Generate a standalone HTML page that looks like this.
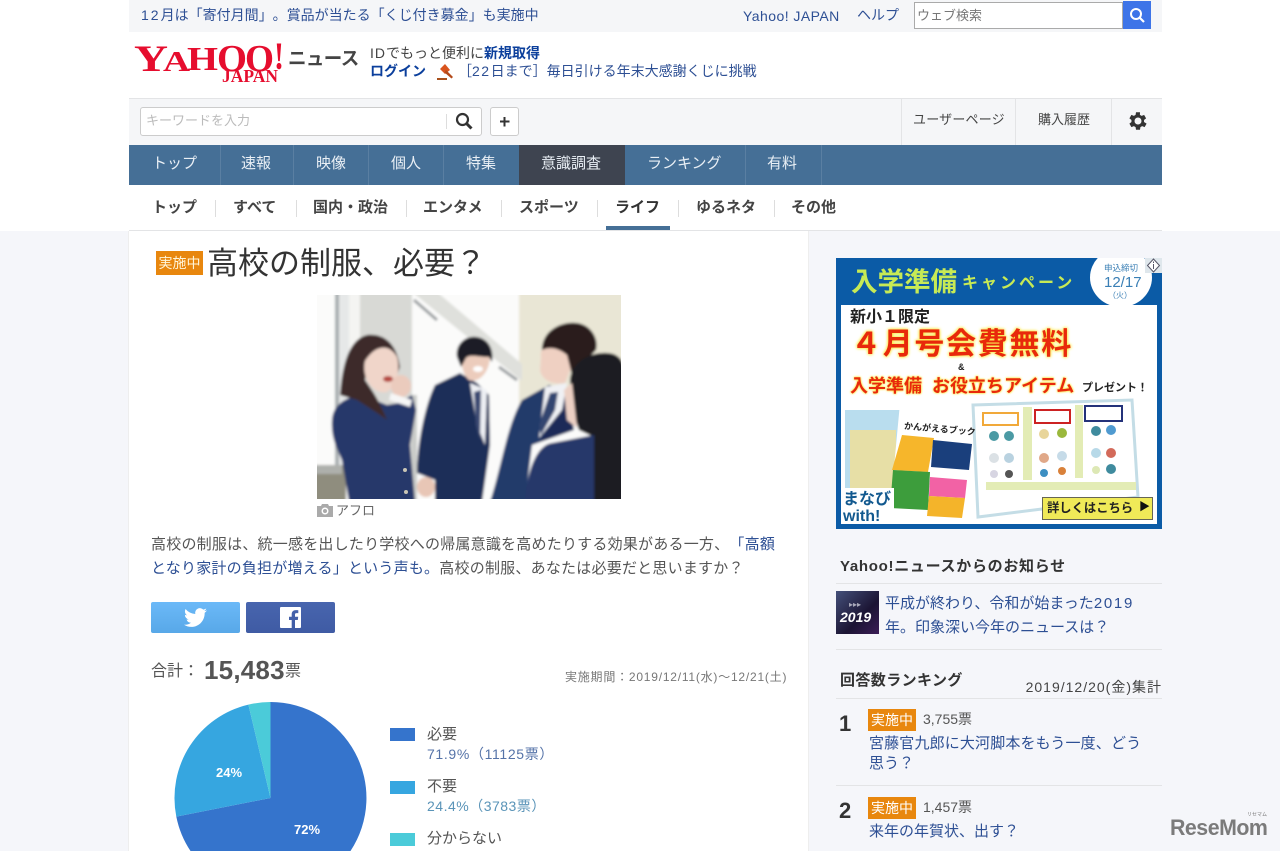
<!DOCTYPE html>
<html lang="ja"><head><meta charset="utf-8"><title>高校の制服、必要？</title>
<style>
html,body{margin:0;padding:0;background:#fff;overflow:hidden;width:1280px;height:851px}
#w{width:1280px;height:851px;overflow:hidden;position:relative;font-family:"Liberation Sans","Noto Sans CJK JP",sans-serif;color:#444;text-spacing-trim:space-all}
.b{position:absolute}
.t{position:absolute;white-space:nowrap;line-height:20px}
.l{color:#2d4f94}
.n{color:#e9eff5;font-size:15px;line-height:20px;top:154px;position:absolute;white-space:nowrap}
.s{position:absolute;top:145px;width:1px;height:40px;background:#5a7fa2}
.m{position:absolute;top:199px;line-height:18px;font-size:15px;font-weight:bold;color:#444;white-space:nowrap}
.d{position:absolute;top:200px;width:1px;height:17px;background:#ddd}
.ad{position:absolute;white-space:nowrap;line-height:1;font-weight:bold}
.badge{position:absolute;background:#e8870e;color:#fff;font-size:14px;line-height:22px;text-align:center;width:48px;height:22px}
</style></head><body><div id="w">
<div class="b" style="left:0;top:231px;width:1280px;height:620px;background:#f5f6fa"></div>
<div class="b" style="left:129px;top:0;width:1033px;height:32px;background:#f5f6f8"></div>
<div class="t l" style="left:141px;top:5px;font-size:14px"><span style="letter-spacing:2px">12</span>月は「寄付月間」。賞品が当たる「くじ付き募金」も実施中</div>
<div class="t l" style="left:743px;top:6px;font-size:14px;letter-spacing:.45px">Yahoo! JAPAN</div>
<div class="t l" style="left:857px;top:5px;font-size:14px">ヘルプ</div>
<div class="b" style="left:914px;top:2px;width:209px;height:27px;border:1px solid #aaa;background:#fff;box-sizing:border-box"></div>
<div class="t" style="left:917px;top:6px;font-size:13px;color:#777">ウェブ検索</div>
<div class="b" style="left:1123px;top:1px;width:28px;height:28px;background:#3d74e8"></div>
<svg class="b" style="left:1123px;top:1px" width="28" height="28"><circle cx="13" cy="13" r="5" fill="none" stroke="#fff" stroke-width="2"/><path d="M17 17l4 4" stroke="#fff" stroke-width="2.2"/></svg>

<svg class="b" style="left:130px;top:38px" width="160" height="50" font-family="Liberation Serif" font-weight="bold" fill="#e60d2e">
<text x="4" y="33" font-size="37" textLength="34" lengthAdjust="spacingAndGlyphs">Y</text>
<text x="33" y="33" font-size="29" textLength="27" lengthAdjust="spacingAndGlyphs">A</text>
<text x="57" y="32" font-size="34" textLength="31" lengthAdjust="spacingAndGlyphs">H</text>
<text x="87" y="33" font-size="38" textLength="30" lengthAdjust="spacingAndGlyphs">O</text>
<text x="115" y="33" font-size="38" textLength="29" lengthAdjust="spacingAndGlyphs">O</text>
<text x="144" y="31" font-size="39" textLength="10" lengthAdjust="spacingAndGlyphs">!</text>
<text x="92" y="44" font-size="18" textLength="56" lengthAdjust="spacingAndGlyphs">JAPAN</text>
</svg>
<div class="t" style="left:288px;top:47px;font-size:18.500px;line-height:24px;font-weight:bold;color:#444;letter-spacing:-.6px">ニュース</div>
<div class="t" style="left:370px;top:43px;font-size:14px;color:#444"><span style="letter-spacing:1px">ID</span>でもっと便利に<b style="color:#0b3f9c">新規取得</b></div>
<div class="t" style="left:370px;top:61px;font-size:14px;font-weight:bold;color:#0b3f9c">ログイン</div>
<svg class="b" style="left:436px;top:61px" width="19" height="20"><path d="M1 17h10v2H1z" fill="#a8501c"/><path d="M4 8l5-5 5 6-5 4z" fill="#d9541e"/><path d="M10 9l7 7-1.500 1.500-7-6z" fill="#b34a1a"/></svg>
<div class="t l" style="left:458px;top:61px;font-size:14px">［<span style="letter-spacing:1.500px">22</span>日まで］毎日引ける年末大感謝くじに挑戦</div>

<div class="b" style="left:129px;top:98px;width:1033px;height:47px;background:#f5f6f8;border-top:1px solid #e3e4e6;box-sizing:border-box"></div>
<div class="b" style="left:140px;top:107px;width:342px;height:29px;background:#fff;border:1px solid #ccc;border-radius:3px;box-sizing:border-box"></div>
<div class="t" style="left:146px;top:111px;font-size:13px;color:#bbb">キーワードを入力</div>
<div class="b" style="left:446px;top:114px;width:1px;height:15px;background:#ddd"></div>
<svg class="b" style="left:455px;top:112px" width="19" height="19"><circle cx="7.500" cy="7.500" r="5.500" fill="none" stroke="#333" stroke-width="2.200"/><path d="M11.500 11.500l5 5" stroke="#333" stroke-width="3"/></svg>
<div class="b" style="left:490px;top:107px;width:29px;height:29px;background:#fff;border:1px solid #ccc;border-radius:3px;box-sizing:border-box"></div>
<svg class="b" style="left:490px;top:107px" width="29" height="29"><path d="M14.500 10v9.500M10 14.500h9.500" stroke="#333" stroke-width="2"/></svg>
<div class="b" style="left:901px;top:99px;width:1px;height:46px;background:#e3e4e6"></div>
<div class="b" style="left:1015px;top:99px;width:1px;height:46px;background:#e3e4e6"></div>
<div class="b" style="left:1111px;top:99px;width:1px;height:46px;background:#e3e4e6"></div>
<div class="t" style="left:913px;top:110px;font-size:13px;color:#444;letter-spacing:.2px">ユーザーページ</div>
<div class="t" style="left:1038px;top:110px;font-size:13px;color:#444">購入履歴</div>
<svg class="b" style="left:1126px;top:109px" width="24" height="24" viewBox="0 0 24 24"><path fill="#333" d="M19.400 13a7.600 7.600 0 000-2l2.100-1.600-2-3.500-2.500 1a7.500 7.500 0 00-1.700-1L15.400 3.200h-4l-.4 2.700a7.500 7.500 0 00-1.700 1l-2.500-1-2 3.500L6.900 11a7.600 7.600 0 000 2l-2.100 1.600 2 3.500 2.500-1a7.500 7.500 0 001.700 1l.4 2.700h4l.4-2.700a7.500 7.500 0 001.700-1l2.500 1 2-3.500zM13.400 15.500a3.500 3.500 0 110-7 3.500 3.500 0 010 7z" transform="translate(-1.400 0)"/></svg>

<div class="b" style="left:129px;top:145px;width:1033px;height:40px;background:#456f96"></div>
<div class="b" style="left:519px;top:145px;width:106px;height:40px;background:#3e4450"></div>
<div class="s" style="left:220px"></div><div class="s" style="left:293px"></div><div class="s" style="left:368px"></div><div class="s" style="left:443px"></div><div class="s" style="left:745px"></div><div class="s" style="left:821px"></div>
<div class="n" style="left:152px">トップ</div><div class="n" style="left:241px">速報</div><div class="n" style="left:316px">映像</div><div class="n" style="left:391px">個人</div><div class="n" style="left:466px">特集</div><div class="n" style="left:541px">意識調査</div><div class="n" style="left:647px">ランキング</div><div class="n" style="left:767px">有料</div>

<div class="m" style="left:152px">トップ</div><div class="d" style="left:215px"></div>
<div class="m" style="left:233px">すべて</div><div class="d" style="left:296px"></div>
<div class="m" style="left:313px">国内・政治</div><div class="d" style="left:406px"></div>
<div class="m" style="left:423px">エンタメ</div><div class="d" style="left:501px"></div>
<div class="m" style="left:519px">スポーツ</div><div class="d" style="left:597px"></div>
<div class="m" style="left:615px;color:#333">ライフ</div><div class="d" style="left:678px"></div>
<div class="m" style="left:696px">ゆるネタ</div><div class="d" style="left:774px"></div>
<div class="m" style="left:791px">その他</div>
<div class="b" style="left:606px;top:226px;width:64px;height:5px;background:#456f96"></div>
<div class="b" style="left:129px;top:230px;width:1033px;height:1px;background:#e3e4e6"></div>

<div class="b" style="left:128px;top:231px;width:681px;height:620px;background:#fff;border-left:1px solid #eee;border-right:1px solid #eee;box-sizing:border-box"></div>
<div class="badge" style="left:156px;top:251px;width:47px;height:24px;line-height:24px;font-size:14px;color:#fff5d8">実施中</div>
<div class="t" style="left:207px;top:243px;font-size:31px;line-height:42px;color:#333">高校の制服、必要？</div>

<svg class="b" style="left:317px;top:295px" width="304" height="204" viewBox="0 0 304 204">
<defs><filter id="f"><feGaussianBlur stdDeviation="1.300"/></filter></defs>
<g filter="url(#f)">
<rect x="-3" y="-3" width="310" height="210" fill="#fbfbfa"/>
<rect x="18" y="-3" width="4" height="175" fill="#a8aeb0"/><rect x="22" y="-3" width="10" height="175" fill="#e6e8e8"/><rect x="32" y="-3" width="11" height="175" fill="#f4f4f2"/>
<rect x="43" y="-3" width="52" height="210" fill="#d8d9d5"/>
<rect x="95" y="100" width="5" height="107" fill="#c9cbc8"/>
<rect x="202" y="-3" width="105" height="113" fill="#e9e6d5"/>
<path d="M95-3h25l85 72v17z" fill="#dfe0dc"/>
<path d="M97 5l23 20M182 72l18 13" stroke="#9a9ea0" stroke-width="3"/>
<rect x="-3" y="170" width="32" height="37" fill="#8f8d7e"/><rect x="-3" y="170" width="28" height="9" fill="#aeb0ac"/>
<path d="M118 90L143 78 160 88 172 100 173 150 165 207H118V185L100 178C100 150 108 110 118 90z" fill="#1f2f58"/>
<path d="M153 88L170 95 168 150 160 130z" fill="#eef0f4"/><path d="M157 97l7-2-1 50-4-15z" fill="#3a4a72"/>
<path d="M145 60C148 50 170 50 173 62 172 80 160 88 152 85 146 80 144 70 145 60z" fill="#ecccbc"/>
<ellipse cx="161" cy="74" rx="5" ry="3" fill="#fff"/>
<path d="M140 62C138 48 150 40 160 42 172 44 177 55 175 67L172 62C160 62 150 58 148 65L144 72z" fill="#1f1f28"/>
<ellipse cx="109" cy="192" rx="9" ry="10" fill="#e8c6b6"/>
<path d="M15 125C16 110 28 102 45 100L70 110 82 108 95 100 99 115 93 150 98 207H32L25 165C18 150 14 140 15 125z" fill="#27396a"/>
<path d="M23 100C25 75 30 45 50 40 68 38 80 50 83 72L80 80C70 60 60 55 52 65L48 85C55 95 62 105 70 125L60 118 40 105z" fill="#3d2b2b"/>
<path d="M48 66C58 50 72 48 80 62 84 78 78 92 70 97 58 100 44 85 48 66z" fill="#f0d5c9"/>
<ellipse cx="71" cy="84" rx="5" ry="3" fill="#b5473f"/>
<ellipse cx="84" cy="91" rx="10" ry="11" fill="#ebcbbd"/>
<path d="M74 98l21 7-2 7-21-7z" fill="#f6f6f6"/>
<path d="M173 207C185 170 190 130 205 105L232 90 250 95 257 135 215 150 208 207z" fill="#223a6a"/>
<path d="M228 92l22-4-5 27-23 28z" fill="#f0f1f4"/><path d="M233 98l8-1-3 18-14 25-2-10z" fill="#33456f"/>
<path d="M250 100l6 35-34 11 23-31z" fill="#1a2c58"/>
<path d="M224 62C222 50 235 45 250 50L255 70 248 88C235 90 225 85 223 75z" fill="#efd0c2"/>
<path d="M225 55C225 35 245 26 260 28 275 30 282 45 279 55L265 70 255 80 250 60C240 52 232 52 225 55z" fill="#2a1d1c"/>
<path d="M253 85C255 65 275 57 290 58 300 58 307 65 307 75V207H277V142L262 135 255 115z" fill="#1b1a20"/>
<path d="M247 95l8-7 5 45-10-8z" fill="#ecd0c4"/>
<path d="M208 207C210 175 220 150 235 148L277 140V207z" fill="#25396a"/>
</g>
<circle cx="88" cy="175" r="2" fill="#c9c5b5"/><circle cx="89" cy="197" r="2" fill="#c9c5b5"/>
</svg>
<svg class="b" style="left:317px;top:503px" width="16" height="15"><path d="M0 3h4l1-2h6l1 2h4v11H0z" fill="#aaa"/><circle cx="8" cy="8" r="3.500" fill="#fff"/><circle cx="8" cy="8" r="2" fill="#aaa"/></svg>
<div class="t" style="left:336px;top:501px;font-size:13px;color:#666">アフロ</div>

<div class="t" style="left:151px;top:535px;font-size:15px;letter-spacing:.22px;color:#555">高校の制服は、統一感を出したり学校への帰属意識を高めたりする効果がある一方、<span class="l">「高額</span></div>
<div class="t" style="left:151px;top:559px;font-size:15px;letter-spacing:.22px;color:#555"><span class="l">となり家計の負担が増える」という声も。</span>高校の制服、あなたは必要だと思いますか？</div>

<div class="b" style="left:151px;top:602px;width:89px;height:31px;border-radius:2px;background:linear-gradient(#6bb9f8,#58a8e8)"></div>
<svg class="b" style="left:184px;top:606px" width="23" height="23" viewBox="0 0 24 24"><path fill="#fff" d="M23.953 4.570a10 10 0 01-2.825.775 4.958 4.958 0 002.163-2.723c-.951.555-2.005.959-3.127 1.184a4.920 4.920 0 00-8.384 4.482C7.690 8.095 4.067 6.130 1.640 3.162a4.822 4.822 0 00-.666 2.475c0 1.710.870 3.213 2.188 4.096a4.904 4.904 0 01-2.228-.616v.060a4.923 4.923 0 003.946 4.827 4.996 4.996 0 01-2.212.085 4.936 4.936 0 004.604 3.417 9.867 9.867 0 01-6.102 2.105c-.390 0-.779-.023-1.170-.067a13.995 13.995 0 007.557 2.209c9.053 0 13.998-7.496 13.998-13.985 0-.210 0-.420-.015-.630A9.935 9.935 0 0024 4.590z"/></svg>
<div class="b" style="left:246px;top:602px;width:89px;height:31px;border-radius:2px;background:linear-gradient(#4865ae,#3f5ba4)"></div>
<svg class="b" style="left:280px;top:607px" width="21" height="21" viewBox="0 0 21 21"><path fill="#fff" d="M1 0h19a1 1 0 011 1v19a1 1 0 01-1 1h-5v-8h2.800l.4-3.200H15V7.700c0-1 .3-1.600 1.600-1.600h1.700V3.200c-.3 0-1.300-.1-2.500-.1-2.500 0-4.100 1.500-4.100 4.200v2.500H9V13h2.700v8H1a1 1 0 01-1-1V1a1 1 0 011-1z"/></svg>

<div class="t" style="left:151px;top:662px;font-size:16px;color:#555">合計：</div>
<div class="t" style="left:204px;top:657px;font-size:26px;line-height:26px;font-weight:bold;color:#555;letter-spacing:.2px">15,483</div>
<div class="t" style="left:285px;top:662px;font-size:16px;color:#555">票</div>
<div class="t" style="left:565px;top:667px;font-size:12px;color:#777;letter-spacing:.78px">実施期間：2019/12/11(水)～12/21(土)</div>

<svg class="b" style="left:170px;top:698px" width="204" height="153" viewBox="170 698 204 153">
<path d="M270.500 798V702A96 96 0 0 1 350.500 851H190.500A96 96 0 0 1 176.300 816.600z" fill="#3574cc"/>
<path d="M270.500 798L176.300 816.600A96 96 0 0 1 248.400 704.600z" fill="#36a6e0"/>
<path d="M270.500 798L248.400 704.600A96 96 0 0 1 270.500 702z" fill="#4bcbd9"/>
<text x="229" y="777" text-anchor="middle" font-family="Liberation Sans" font-size="13" font-weight="bold" fill="#fff">24%</text>
<text x="307" y="834" text-anchor="middle" font-family="Liberation Sans" font-size="13" font-weight="bold" fill="#fff">72%</text>
</svg>
<div class="b" style="left:390px;top:728px;width:25px;height:13px;background:#3574cc"></div>
<div class="t" style="left:427px;top:725px;font-size:15px;color:#555">必要</div>
<div class="t" style="left:427px;top:744px;font-size:14px;color:#5573a8;letter-spacing:.65px">71.9%（11125票）</div>
<div class="b" style="left:390px;top:781px;width:25px;height:13px;background:#36a6e0"></div>
<div class="t" style="left:427px;top:777px;font-size:15px;color:#555">不要</div>
<div class="t" style="left:427px;top:796px;font-size:14px;color:#5a94b8;letter-spacing:.5px">24.4%（3783票）</div>
<div class="b" style="left:390px;top:833px;width:25px;height:13px;background:#4bcbd9"></div>
<div class="t" style="left:427px;top:829px;font-size:15px;line-height:20px;color:#555">分からない</div>

<!-- Ad -->
<div class="b" style="left:836px;top:258px;width:326px;height:271px;background:#0b5ba6;overflow:hidden">
<div class="b" style="left:5px;top:47px;width:316px;height:219px;background:#fff"></div>
<div class="b" style="left:254px;top:-10px;width:62px;height:59px;border-radius:50%;background:#fff"></div>
<div class="ad" style="left:15px;top:11px;font-size:26.500px;color:#c7ea55">入学準備</div>
<div class="ad" style="left:126px;top:18px;font-size:16px;color:#c7ea55;letter-spacing:3px">キャンペーン</div>
<div class="ad" style="left:268px;top:6px;font-size:8.500px;color:#3a7fb5;font-weight:normal">申込締切</div>
<div class="ad" style="left:268px;top:17px;font-size:15px;color:#3a7fb5;font-weight:normal">12/17</div>
<div class="ad" style="left:272px;top:34px;font-size:8px;color:#3a7fb5;font-weight:normal">（火）</div>
<div class="b" style="left:309px;top:0;width:17px;height:15px;background:#dfe7ec"></div>
<svg class="b" style="left:309px;top:0" width="17" height="15"><path d="M8.500 1l6 6.500-6 6.500-6-6.500z" fill="#fff" stroke="#556"/><path d="M8.500 6v5M8.500 3.500v1.500" stroke="#556"/></svg>
<div class="ad" style="left:14px;top:52px;font-size:16px;color:#222">新小１限定</div>
<div class="ad" style="left:15px;top:72px;font-size:30px;color:#e8290b;letter-spacing:1.700px;text-shadow:0 0 3px #fbe73a,0 0 3px #fbe73a">４月号会費無料</div>
<div class="ad" style="left:122px;top:105px;font-size:9px;color:#222">&amp;</div>
<div class="ad" style="left:14px;top:119px;font-size:18px;color:#e8290b;text-shadow:0 0 2px #fbe73a,0 0 2px #fbe73a">入学準備</div>
<div class="ad" style="left:96px;top:119px;font-size:18px;color:#e8290b;text-shadow:0 0 2px #fbe73a,0 0 2px #fbe73a">お役立ちアイテム</div>
<div class="ad" style="left:246px;top:125px;font-size:11px;color:#222">プレゼント！</div>
<div class="b" style="left:9px;top:152px;width:56px;height:94px;background:#b9ddee"></div>
<div class="b" style="left:14px;top:172px;width:46px;height:70px;background:#e7dfa6"></div>
<svg class="b" style="left:0;top:0" width="326" height="271">
<path d="M64 145l75 10-13 105-72-8z" fill="#fff"/>
<path d="M66 177l32 3-6 34-36-2z" fill="#f6b62b"/><path d="M97 182l39 4-3 26-38-3z" fill="#1a3f7c"/>
<path d="M57 212l37 2-2 38-38-2z" fill="#3d9d3c"/><path d="M94 219l37 3-2 18-36-2z" fill="#f262a5"/><path d="M93 238l36 2-3 20-35-2z" fill="#f4b42a"/>
<g transform="translate(138 140)"><path d="M-1 7l159-5 6 97-160 20z" fill="#fff" stroke="#c4dde6" stroke-width="3"/>
<rect x="9" y="15" width="35" height="12" fill="#fff" stroke="#f1a93a" stroke-width="2"/><rect x="61" y="12" width="35" height="13" fill="#fff" stroke="#c22" stroke-width="2"/><rect x="111" y="8" width="37" height="15" fill="#fff" stroke="#24327a" stroke-width="2"/>
<rect x="49" y="9" width="9" height="73" fill="#e3ecb5"/><rect x="101" y="7" width="8" height="73" fill="#e3ecb5"/><rect x="12" y="84" width="150" height="8" fill="#e3ecb5"/>
<circle cx="20" cy="38" r="5" fill="#4b9aa4"/><circle cx="35" cy="38" r="5" fill="#4b9aa4"/><circle cx="70" cy="36" r="5" fill="#e8d59a"/><circle cx="88" cy="35" r="5" fill="#9ab83c"/><circle cx="122" cy="33" r="5" fill="#3f8b9e"/><circle cx="137" cy="32" r="5" fill="#4f9ad0"/>
<circle cx="20" cy="60" r="5" fill="#dbe1e5"/><circle cx="35" cy="60" r="5" fill="#b9d2e0"/><circle cx="70" cy="60" r="5" fill="#e0a888"/><circle cx="88" cy="58" r="5" fill="#c6dbe8"/><circle cx="122" cy="55" r="5" fill="#b7d9e8"/><circle cx="137" cy="55" r="5" fill="#d36a5a"/>
<circle cx="20" cy="76" r="4" fill="#d7d5e2"/><circle cx="35" cy="76" r="4" fill="#555"/><circle cx="70" cy="75" r="4" fill="#3d8fc2"/><circle cx="88" cy="73" r="4" fill="#d9813a"/><circle cx="122" cy="72" r="4" fill="#dde8b5"/><circle cx="137" cy="71" r="5" fill="#3f8b9e"/></g>
</svg>
<div class="ad" style="left:68px;top:167px;font-size:9px;color:#222;transform:rotate(5deg)">かんがえるブック</div>
<div class="b" style="left:5px;top:230px;width:53px;height:36px;background:#fff"></div>
<div class="ad" style="left:7px;top:233px;font-size:16px;color:#12598f;line-height:17px">まなび<br>with!</div>
<div class="b" style="left:206px;top:239px;width:111px;height:23px;background:#f0ea58;border:1px solid #665;box-sizing:border-box"></div>
<div class="ad" style="left:211px;top:244px;font-size:12.300px;color:#222">詳しくはこちら</div>
<div class="ad" style="left:303px;top:244px;font-size:11px;color:#111">▶</div>
</div>

<div class="t" style="left:840px;top:557px;font-size:15px;font-weight:bold;color:#333;letter-spacing:.7px">Yahoo!ニュースからのお知らせ</div>
<div class="b" style="left:836px;top:583px;width:326px;height:1px;background:#e3e4e6"></div>
<div class="b" style="left:836px;top:591px;width:43px;height:43px;background:linear-gradient(135deg,#44507a,#1b1433 60%,#3b1d56)"></div>
<div class="t" style="left:840px;top:607px;font:italic bold 14px/20px 'Liberation Sans',sans-serif;color:#fff">2019</div>
<div class="t" style="left:849px;top:595px;font-size:8px;color:#aab">▸▸▸</div>
<div class="t l" style="left:885px;top:594px;font-size:15px">平成が終わり、令和が始まった<span style="letter-spacing:1.700px">2019</span></div>
<div class="t l" style="left:885px;top:618px;font-size:15px">年。印象深い今年のニュースは？</div>
<div class="b" style="left:836px;top:649px;width:326px;height:1px;background:#e3e4e6"></div>
<div class="t" style="left:840px;top:671px;font-size:15px;font-weight:bold;color:#333;letter-spacing:.4px">回答数ランキング</div>
<div class="t" style="left:1000px;top:677px;font-size:14px;color:#444;width:162px;text-align:right;letter-spacing:1px">2019/12/20(金)集計</div>
<div class="b" style="left:836px;top:698px;width:326px;height:1px;background:#e3e4e6"></div>
<div class="t" style="left:839px;top:714px;font-size:22px;font-weight:bold;color:#333">1</div>
<div class="badge" style="left:868px;top:709px">実施中</div>
<div class="t" style="left:923px;top:709px;font-size:14px;color:#555">3,755票</div>
<div class="t l" style="left:869px;top:734px;font-size:15px;letter-spacing:.15px">宮藤官九郎に大河脚本をもう一度、どう</div>
<div class="t l" style="left:869px;top:754px;font-size:15px">思う？</div>
<div class="b" style="left:836px;top:785px;width:326px;height:1px;background:#e3e4e6"></div>
<div class="t" style="left:839px;top:801px;font-size:22px;font-weight:bold;color:#333">2</div>
<div class="badge" style="left:868px;top:797px">実施中</div>
<div class="t" style="left:923px;top:797px;font-size:14px;color:#555">1,457票</div>
<div class="t l" style="left:869px;top:822px;font-size:15px">来年の年賀状、出す？</div>

<div class="t" style="left:1170px;top:817px;font-size:22px;line-height:22px;font-weight:bold;color:#7b7b7b;letter-spacing:-.5px;transform-origin:left top;transform:scaleX(.97)">ReseMom</div>
<div class="t" style="left:1247px;top:812px;font-size:5px;line-height:6px;color:#777">リセマム</div>
</div></body></html>
